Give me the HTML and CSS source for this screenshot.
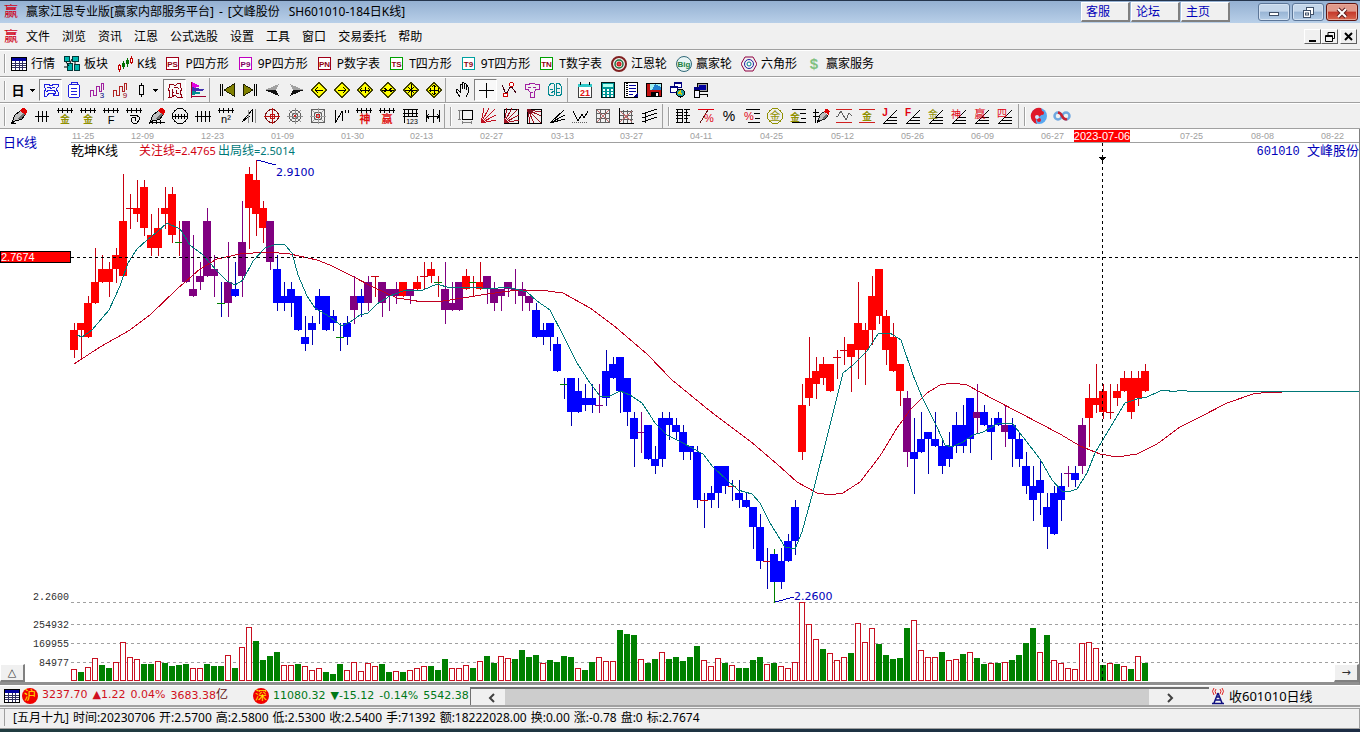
FILE: index.html
```html
<!DOCTYPE html>
<html lang="zh-CN">
<head>
<meta charset="utf-8">
<title>赢家江恩专业版</title>
<link rel="stylesheet" href="styles.css">
</head>
<body>
<div class="app">
  <header class="titlebar">
    <span class="logo">赢</span>
    <h1 class="title"><span>赢家江恩专业版[赢家内部服务平台]</span><span>-</span><span>[文峰股份</span><span class="symbol">SH601010-184日K线]</span></h1>
    <div class="links">
      <button>客服</button><button>论坛</button><button>主页</button>
    </div>
    <div class="wincontrols">
      <button aria-label="最小化" data-icon="wmin"></button>
      <button aria-label="还原" data-icon="wrestore"></button>
      <button aria-label="关闭" class="close" data-icon="wclose"></button>
    </div>
  </header>

  <nav class="menubar">
    <span class="logo">赢</span>
    <button>文件</button><button>浏览</button><button>资讯</button><button>江恩</button><button>公式选股</button><button>设置</button><button>工具</button><button>窗口</button><button>交易委托</button><button>帮助</button>
    <div class="mdi">
      <button aria-label="最小化窗口" data-icon="mmin"></button>
      <button aria-label="还原窗口" data-icon="mrestore"></button>
      <button aria-label="关闭窗口" class="mdi-close" data-icon="mclose"></button>
    </div>
  </nav>

  <div class="toolbar named">
    <button data-icon="quote">行情</button>
    <button data-icon="sector">板块</button>
    <button data-icon="kline">K线</button>
    <button data-icon="ps">P四方形</button>
    <button data-icon="p9">9P四方形</button>
    <button data-icon="pn">P数字表</button>
    <button data-icon="ts">T四方形</button>
    <button data-icon="t9">9T四方形</button>
    <button data-icon="tn">T数字表</button>
    <button data-icon="wheel">江恩轮</button>
    <button data-icon="big">赢家轮</button>
    <button data-icon="hex">六角形</button>
    <button data-icon="dollar">赢家服务</button>
  </div>

  <div class="toolbar tools">
    <div class="group">
      <button class="drop" aria-label="周期" data-icon="day"></button>
      <button class="on" aria-label="叠加" data-icon="cloud"></button>
      <button aria-label="资料" data-icon="clip"></button>
      <button aria-label="三段" data-icon="wave3"></button>
      <button aria-label="九段" data-icon="wave9"></button>
      <button class="drop" aria-label="K线样式" data-icon="candle"></button>
      <button class="on" aria-label="形态" data-icon="shape"></button>
      <button aria-label="筹码" data-icon="flag"></button>
    </div>
    <div class="group">
      <button aria-label="最前" data-icon="first"></button>
      <button aria-label="最后" data-icon="last"></button>
      <button aria-label="向前" data-icon="prev"></button>
      <button aria-label="向后" data-icon="next"></button>
      <button aria-label="左移" data-icon="dleft"></button>
      <button aria-label="右移" data-icon="dright"></button>
      <button aria-label="横向放大" data-icon="dwide"></button>
      <button aria-label="横向缩小" data-icon="dnarrow"></button>
      <button aria-label="整体缩小" data-icon="dshrink"></button>
      <button aria-label="整体放大" data-icon="dgrow"></button>
    </div>
    <div class="group">
      <button aria-label="拖动" data-icon="hand"></button>
      <button class="on" aria-label="十字光标" data-icon="cross"></button>
      <button aria-label="连线" data-icon="link"></button>
      <button aria-label="拼图" data-icon="puzzle"></button>
      <button aria-label="智能" data-icon="brain"></button>
    </div>
    <div class="group spaced">
      <button aria-label="日历" data-icon="cal"></button>
      <button aria-label="计算器" data-icon="calc"></button>
      <button aria-label="记事本" data-icon="note"></button>
      <button aria-label="保存" data-icon="save"></button>
      <button aria-label="网络" data-icon="net"></button>
      <button aria-label="数据" data-icon="pc"></button>
    </div>
  </div>

  <div class="toolbar tools">
    <div class="group">
      <button aria-label="画笔" data-icon="pen"></button>
      <button aria-label="等分尺" data-icon="ruler3"></button>
      <button aria-label="黄金尺" data-icon="gold1"></button>
      <button aria-label="黄金时间尺" data-icon="gold1"></button>
      <button aria-label="斐波那契尺" data-icon="fib"></button>
      <button aria-label="螺旋" data-icon="spiral"></button>
      <button aria-label="标尺笔" data-icon="penruler"></button>
      <button aria-label="圆尺" data-icon="circruler"></button>
      <button aria-label="密尺" data-icon="ruler4"></button>
      <button aria-label="平方尺" data-icon="nsq"></button>
      <button aria-label="镜像" data-icon="mirror"></button>
      <button aria-label="圆心" data-icon="target"></button>
      <button aria-label="圆网" data-icon="web"></button>
      <button aria-label="方网" data-icon="webbox"></button>
      <button aria-label="波幅" data-icon="zig"></button>
      <button aria-label="神尺" data-icon="shen"></button>
      <button aria-label="赢尺" data-icon="ying"></button>
      <button aria-label="数字尺" data-icon="r123"></button>
      <button aria-label="跨度" data-icon="span"></button>
    </div>
    <div class="group grip">
      <button aria-label="矩形" data-icon="rect"></button>
      <button aria-label="角度线" data-icon="fan"></button>
      <button aria-label="方框角度线" data-icon="fanbox"></button>
      <button aria-label="反向角度线" data-icon="fanbox2"></button>
      <button aria-label="射线" data-icon="rays"></button>
      <button aria-label="折线" data-icon="vee"></button>
      <button aria-label="网格" data-icon="grid"></button>
      <button aria-label="箭头网格" data-icon="gridarrow"></button>
      <button aria-label="平行线" data-icon="parallel"></button>
    </div>
    <div class="group grip">
      <button aria-label="价格尺" data-icon="ladder"></button>
      <button aria-label="斜百分比" data-icon="pctline"></button>
      <button aria-label="百分比" data-icon="pct"></button>
      <button aria-label="百分比线" data-icon="pctrule"></button>
      <button aria-label="黄金圆" data-icon="goldcirc"></button>
      <button aria-label="黄金线" data-icon="goldrule"></button>
      <button aria-label="价格笔" data-icon="pen2"></button>
      <button aria-label="波动带" data-icon="waveband"></button>
      <button aria-label="黄金带" data-icon="goldband"></button>
      <button aria-label="江恩角" data-icon="aj"></button>
      <button aria-label="斐波角" data-icon="af"></button>
      <button aria-label="黄金角" data-icon="ag"></button>
      <button aria-label="神角" data-icon="as"></button>
      <button aria-label="赢角" data-icon="ay"></button>
      <button aria-label="四角" data-icon="a4"></button>
    </div>
    <div class="group grip">
      <button aria-label="太极" data-icon="taiji"></button>
      <button aria-label="无穷" data-icon="inf"></button>
    </div>
  </div>

  <main class="chart">
    <svg class="plot" id="plot" role="img" aria-label="文峰股份日K线图"></svg>
    <button class="corner left" aria-label="展开">△</button>
    <button class="corner right" aria-label="右移">→</button>
  </main>

  <section class="indices">
    <div class="ticker">
      <span data-icon="quote" class="tick-icon"></span>
      <span class="badge">沪</span>
      <span class="values up"><span>3237.70</span><span>▲1.22</span><span>0.04%</span><span>3683.38<span class="unit">亿</span></span></span>
      <span class="badge second">深</span>
      <span class="values down"><span>11080.32</span><span>▼-15.12</span><span>-0.14%</span><span>5542.38</span></span>
    </div>
    <div class="scroll">
      <button aria-label="向左滚动" data-icon="chevl"></button>
      <div class="thumb"></div>
      <button aria-label="向右滚动" data-icon="chevr"></button>
    </div>
    <div class="receive"><span data-icon="tower" class="tick-icon"></span>收601010日线</div>
  </section>

  <footer class="status">
    <p><span>[五月十九]</span><span>时间:20230706</span><span>开:2.5700</span><span>高:2.5800</span><span>低:2.5300</span><span>收:2.5400</span><span>手:71392</span><span>额:18222028.00</span><span>换:0.00</span><span>涨:-0.78</span><span>盘:0</span><span>标:2.7674</span></p>
  </footer>
  <div class="desktop"></div>
</div>
<script src="app.js"></script>
</body>
</html>
```
FILE: styles.css
```css
* { box-sizing: border-box; }
body {
  margin: 0;
  background: #f0f0f0;
  color: #000;
  font: 12px/16px "Noto Sans", "Noto Sans CJK SC", sans-serif;
}
button {
  margin: 0;
  padding: 0;
  border: 0;
  background: none;
  color: inherit;
  font: inherit;
  white-space: nowrap;
}
svg { display: block; }
h1, p { margin: 0; font: inherit; white-space: nowrap; }
.app { display: flex; flex-direction: column; min-height: 100vh; }
.logo {
  width: 22px;
  color: #d00018;
  font: 14px/16px "Liberation Serif", "Noto Sans CJK SC", serif;
}

.titlebar {
  display: flex;
  align-items: center;
  height: 23px;
  padding: 0 2px 0 4px;
  border-top: 1px solid #24344c;
  background: linear-gradient(#94b0d2, #b8cfe8);
}
.title { display: flex; flex: 1; gap: 5px; }
.symbol { margin-left: 4px; }
.links { display: flex; gap: 1px; margin-right: 28px; }
.links button {
  width: 49px;
  height: 20px;
  padding-left: 4px;
  border: 1px solid;
  border-color: #fff #808080 #808080 #fff;
  border-right-width: 2px;
  border-bottom-width: 2px;
  background: #f0f0f0;
  color: #0000b8;
  line-height: 16px;
  text-align: left;
}
.wincontrols { display: flex; gap: 2px; }
.wincontrols button {
  display: grid;
  place-items: center;
  width: 32px;
  height: 18px;
  border: 1px solid #5c7698;
  border-radius: 3px;
  background: linear-gradient(#c4d6ea 45%, #98b4d4 50%, #b4cce6);
  box-shadow: inset 0 0 0 1px #d4e2f2;
}
.wincontrols .close {
  border-color: #601410;
  background: linear-gradient(#e09a8c 45%, #c4382a 50%, #d86850);
  box-shadow: inset 0 0 0 1px #e8a898;
}

.menubar {
  display: flex;
  align-items: center;
  height: 27px;
  padding: 1px 3px 0 4px;
  border-bottom: 1px solid #a0a0a0;
}
.menubar > button { margin-right: 12px; }
.mdi { display: flex; margin-left: auto; }
.mdi button {
  width: 17px;
  height: 15px;
  border: 1px solid;
  border-color: #fff #606060 #606060 #fff;
  background: #f0f0f0;
}
.mdi .mdi-close { margin-left: 2px; }

.toolbar {
  display: flex;
  align-items: center;
  border-top: 1px solid #fff;
  border-bottom: 1px solid #a0a0a0;
  height: 26px;
}
.toolbar::before, .grip::before {
  content: "";
  width: 1px;
  height: 19px;
  background: #a0a0a0;
  box-shadow: 1px 0 #fff;
}
.toolbar::before { margin: 0 2px 0 4px; }
.named { height: 27px; gap: 9px; }
.named::before { margin-right: -3px; }
.named button { display: flex; align-items: center; gap: 4px; }
.group { display: flex; align-items: center; }
.group + .group { padding-left: 5px; border-left: 1px solid #a0a0a0; height: 24px; }
.group.spaced { margin-left: 1px; }
.group.grip { padding-right: 2px; }
.group.grip::before { margin-right: 2px; }
.tools svg { shape-rendering: crispEdges; }
.tools .group button {
  display: grid;
  place-items: center;
  width: 23px;
  height: 22px;
}
.tools .group .drop { width: 32px; }
.tools .group .on {
  border: 1px solid;
  border-color: #808080 #fff #fff #808080;
  background: #f8f8f8;
}

.chart { position: relative; flex: 1 0 auto; background: #fff; border-right: 1px solid #808080; border-bottom: 3px solid #909090; }
.plot { width: 100%; height: 553px; shape-rendering: crispEdges; }
.plot text { white-space: pre; }
.corner {
  position: absolute;
  bottom: 0;
  width: 25px;
  height: 18px;
  border: 1px solid;
  border-color: #fff #808080 #808080 #fff;
  border-right-width: 2px;
  border-bottom-width: 2px;
  background: #f0f0f0;
  color: #303030;
  font: 11px/14px "DejaVu Sans", sans-serif;
}
.corner.left { left: 0; }
.corner.right { right: 0; }
.cjk13 { font: 13px "Noto Sans", "Noto Sans CJK SC", sans-serif; }
.cjk12 { font: 12px "Noto Sans", "Noto Sans CJK SC", sans-serif; }
.num { font-size: 11px; }
.code { font: 12px "Liberation Mono", "Noto Sans CJK SC", monospace; }
.name { font-size: 13px; }
.axis { font: 10px "Liberation Mono", monospace; fill: #303030; }
.date { font: 9px "Liberation Sans", sans-serif; fill: #a0a0a0; }
.mark { font: 11px "Liberation Sans", sans-serif; fill: #fff; }
.price { font: 11px "DejaVu Sans", sans-serif; fill: #0000b8; }

.indices {
  display: flex;
  align-items: center;
  height: 22px;
  padding: 0 0 0 4px;
  border-top: 1px solid #fff;
  border-bottom: 2px solid #a0a0a0;
}
.ticker {
  display: flex;
  align-items: center;
  width: 466px;
  overflow: hidden;
  white-space: nowrap;
  font: 11px/16px "DejaVu Sans", "Noto Sans CJK SC", sans-serif;
}
.tick-icon { flex: none; }
.values { display: flex; gap: 5px; }
.badge {
  flex: none;
  width: 16px;
  height: 16px;
  margin: 0 4px 0 2px;
  border-radius: 50%;
  background: #f00000;
  color: #ffe800;
  font-size: 12px;
  text-align: center;
}
.badge.second { margin-left: 25px; }
.up { color: #d01020; }
.unit { color: #601010; font-size: 12px; }
.down { color: #007818; }
.scroll {
  display: flex;
  align-items: stretch;
  flex: 1;
  height: 18px;
  border-top: 2px solid #707070;
  border-left: 1px solid #707070;
}
.scroll button { display: grid; place-items: center; width: 34px; padding-left: 8px; }
.scroll button:last-child { width: 60px; padding: 0 18px 0 0; }
.thumb { flex: 1; background: #cdcdcd; }
.receive {
  display: flex;
  align-items: center;
  gap: 2px;
  width: 151px;
  font-size: 13px;
  white-space: nowrap;
}

.status {
  height: 21px;
  margin-top: 1px;
  padding-left: 4px;
  border: 1px solid #a0a0a0;
  border-width: 1px 1px 1px 0;
  line-height: 17px;
}
.status p {
  display: flex;
  gap: 4px;
  margin-right: 4px;
  padding-left: 8px;
  border-left: 1px solid #a0a0a0;
}
.desktop { height: 4px; background: linear-gradient(90deg, #203c40, #1c2c44); }
```
FILE: app.js
```js
const GOLD = '#909000';

function path(d, color = '#000', extra = '') {
  return `<path d="${d}" fill="none" stroke="${color}" ${extra}/>`;
}
function fill(d, color) {
  return `<path d="${d}" fill="${color}"/>`;
}
function glyph(t, x, y, size, color, weight = 400) {
  return `<text x="${x}" y="${y}" font-size="${size}" fill="${color}" font-weight="${weight}" text-anchor="middle" font-family="'Liberation Sans','Noto Sans CJK SC',sans-serif">${t}</text>`;
}
function boxed(t, border, color = '#900010') {
  return `<rect x="2.5" y="2.5" width="12" height="12" fill="#fff" stroke="${border}" stroke-width="1"/>` + glyph(t, 8.5, 12, 8, color, 700);
}
function diamond(d) {
  return '<path d="M9 1.500L16.500 9L9 16.500L1.500 9Z" fill="#ffff00" stroke="#404000"/>' + path(d, '#000');
}
function comb(n) {
  let d = 'M1 3.500H17';
  for (let i = 0; i < n; i++) {
    const x = Math.round(2 + i * 13 / (n - 1)) + .5;
    d += `M${x} 1V6`;
  }
  return path(d);
}
const angle = path('M3 16L16 3M6 13.500H16M9 10.500H16M2 16.500H16');
const nib = fill('M2 15L5 8L10 4L15 8L12 12Z', '#c0c0c0') + fill('M8 12L13 6L15 8L12 12Z', '#707070') + path('M2 15L5 8L10 4M2 15L12 12L15 8') + fill('M10 4L12 1H15L17 4L16 8Z', '#e00000') + fill('M1 17L2 13L5 15Z', '#000');
const nibBase = path('M1 16.500H6');
const fan = 'M2 16L5 1M2 16L10 1M2 16L16 2M2 16L17 8M2 16L17 13';

const ICONS = {
  quote: '<rect x="1.500" y="2.500" width="15" height="13" fill="#fff" stroke="#000"/>' + fill('M2 3H16V6H2Z', '#0000a0') + path('M2 8.500H16M2 10.500H16M2 12.500H16M5.500 6V15M9.500 6V15M12.500 6V15', '#303060'),
  sector: '<g fill="#00b8b0" stroke="#003838"><rect x="1.500" y="1.500" width="5" height="5"/><rect x="9.500" y="1.500" width="6" height="5"/><rect x="4.500" y="8.500" width="5" height="7"/><rect x="11.500" y="9.500" width="5" height="6"/></g>' + path('M3 7L6 11M9 4L7 8M12 7V9M1 12H4'),
  kline: path('M3.500 9V17M15.500 1V9', '#c00000') + '<rect x="2.500" y="10.500" width="2" height="4" fill="#fff" stroke="#c00000"/><rect x="14.500" y="3.500" width="2" height="4" fill="#fff" stroke="#c00000"/>' + path('M7.500 6V14M11.500 3V12', '#007000') + fill('M6 8H9V12H6ZM10 5H13V9H10Z', '#007000'),
  ps: boxed('PS', '#a00018'), p9: boxed('P9', '#c000c0', '#800060'), pn: boxed('PN', '#a00018'),
  ts: boxed('TS', '#00a000'), t9: boxed('T9', '#00a0a0'), tn: boxed('TN', '#00a000'),
  wheel: '<g fill="none" stroke-width="2"><circle cx="9" cy="9" r="7" stroke="#802020"/><circle cx="9" cy="9" r="4" stroke="#207040" stroke-width="1.500"/><circle cx="9" cy="9" r="1.500" stroke="#d02020"/></g>',
  big: '<circle cx="9" cy="9" r="7.500" fill="#e8f4f4" stroke="#306878"/>' + glyph('Big', 9, 12, 8, '#208040', 700),
  hex: path('M5 2H13L17 9L13 16H5L1 9Z', '#900040') + '<circle cx="9" cy="9" r="4.500" fill="none" stroke="#2020a0"/><circle cx="9" cy="9" r="2" fill="#fff" stroke="#008090"/>',
  dollar: glyph('$', 9, 14, 15, '#80c080', 700),
  day: glyph('日', 10, 14, 13, '#000', 700) + fill('M22 8H27L24.500 11Z', '#000'),
  candle: path('M9.500 2V16') + '<rect x="7.500" y="4.500" width="4" height="9" fill="#f0f0f0" stroke="#000"/>' + fill('M21 8H26L23.500 11Z', '#000'),
  cloud: path('M2 6V3H6L9 5L12 3H16V6L14 8L16 11V14H12L14 11M2 6L4 8L2 11V15H5L7 12H11L13 15M5 6H8L9 8L11 6H13M4 11L7 9H11L14 11', '#2020e0'),
  clip: '<rect x="3.500" y="3.500" width="11" height="13" rx="2" fill="#fff" stroke="#2020e0"/>' + path('M6 3.500V1.500H12V3.500M6 7.500H12M6 10.500H12M6 13.500H12', '#2020e0'),
  wave3: path('M2.500 16V9.500H5.500V14.500H8.500V5.500H11.500V10.500H13.500V2.500H15.500V9', '#a020a0') + glyph('3', 14, 17, 8, '#000080'),
  wave9: path('M2.500 16V9.500H5.500V14.500H8.500V5.500H11.500V10.500H13.500V2.500H15.500V9', '#b02020') + glyph('9', 14, 17, 8, '#900010'),
  shape: path('M3 3H7L9 5L12 2H15L14 6L16 8L14 11L16 16H11L9 14L6 16H3L4 11L2 8L4 6ZM8 6H11L13 8M6 8V11L8 12M10 9V12H13M7 15L6 12', '#900010'),
  flag: fill('M3 1L11 5L3 8Z', '#e000e0') + fill('M3 6L17 9L3 11Z', '#4030b0') + fill('M3 10L13 12L3 14Z', '#009090') + path('M2.500 1V17M2 15.500H17', '#a00030'),
  first: path('M2.500 3V15M4.500 3V15') + '<path d="M16 3L6 9L16 15Z" fill="#808000" stroke="#202000"/>',
  last: path('M15.500 3V15M13.500 3V15') + '<path d="M2 3L12 9L2 15Z" fill="#808000" stroke="#202000"/>',
  prev: fill('M15 3L1 9H12Z', '#a0a0a0') + fill('M1 9H12L15 15Z', '#101010'),
  next: fill('M3 3L17 9H6Z', '#a0a0a0') + fill('M3 15L17 9H6Z', '#101010'),
  dleft: diamond('M5 9.500H13M8 6L5 9L8 12'), dright: diamond('M5 9.500H13M10 6L13 9L10 12'),
  dwide: diamond('M4 9.500H14M6 7L4 9L6 11M12 7L14 9L12 11M9.500 6V12'),
  dnarrow: diamond('M3 9.500H15M5 7L8 9L5 11M13 7L10 9L13 11'),
  dshrink: diamond('M3 9.500H15M9.500 3V15M6 6L12 12M12 6L6 12'),
  dgrow: diamond('M4 9.500H14M9.500 4V14M7 6L9 4L11 6M7 12L9 14L11 12M5.500 7V11M13.500 7V11'),
  hand: path('M6 16L2 10Q2 8 4 9L6 11V4Q7 2 8 4V8V2Q9 1 10 2V8V3Q11 2 12 3V9V5Q14 4 14 6V12L12 16'),
  cross: path('M9.500 2V17M2 9.500H17'),
  link: path('M2 4L6 13L11 5L16 12', '#400010') + '<g fill="#fff" stroke="#d00000"><circle cx="5.500" cy="14" r="2"/><circle cx="11.500" cy="3.500" r="2"/></g>',
  puzzle: path('M2 3.500H6L8 2H11L13 3.500H16V8.500H13L11 11V16.500H7V11L5 8.500H2ZM5 6.500H8M10 6.500H13M7.500 11H10', '#a020a0'),
  brain: path('M8 3L5 2L3 5L2 8L3 10L2 13L5 15L8 14V3M10 3L13 2L15 5L16 8L15 10L16 13L13 15L10 14V3M4 8H7M5 12L8 10M11 7L14 8M10 11H14', '#008890'),
  cal: '<rect x="2.500" y="3.500" width="13" height="13" fill="#fff" stroke="#404040"/>' + fill('M2 3H16V6H2Z', '#30c8c8') + path('M4.500 1V4M13.500 1V4') + glyph('21', 9, 15, 9, '#e01010', 700),
  calc: '<rect x="2.500" y="1.500" width="13" height="15" fill="#009898" stroke="#001818"/>' + fill('M4 3H14V6H4Z', '#b0fff0') + path('M4 8.500H14M4 11.500H14M4 14.500H14', '#fff', 'stroke-width="2" stroke-dasharray="2 2"'),
  note: '<rect x="2.500" y="1.500" width="13" height="15" fill="#fff" stroke="#000"/>' + path('M4.500 2V16', '#000', 'stroke-dasharray="1 1" stroke-width="2"') + path('M7 4.500H14M7 7.500H14M7 10.500H14M7 13.500H11', '#0000a0') + fill('M11 16L16 11V16Z', '#000080'),
  save: '<rect x="1.500" y="2.500" width="15" height="13" fill="#c01010" stroke="#000"/>' + fill('M5 3H16V9H5Z', '#a0f0f0') + fill('M6 11H14V15H6Z', '#000') + fill('M10 3L16 6V9H7Z', '#2080d0') + fill('M11 12H13V15H11Z', '#fff'),
  net: '<g fill="#fff" stroke="#000080"><rect x="6.500" y="1.500" width="7" height="5"/><rect x="2.500" y="5.500" width="7" height="6"/></g>' + fill('M6 1H14V3H6ZM2 5H10V7H2Z', '#000080') + '<circle cx="12.500" cy="12" r="4" fill="#20a0a0" stroke="#000"/>' + fill('M9 12L13 9L14 14Z', '#e0d000'),
  pc: '<rect x="6.500" y="2.500" width="10" height="8" fill="#a0a0a0" stroke="#000"/>' + fill('M8 4H15V9H8Z', '#0000a0') + fill('M3 9H8V16H3Z', '#f4f4ff') + path('M3 9H8V16H3ZM9 13.500H16V16') + fill('M3 6H8V9H3Z', '#000080'),
  pen: nib + nibBase,
  ruler3: path('M2 9.500H16M5.500 4V15M9.500 4V15M13.500 4V15'),
  ruler4: path('M1 9.500H17M3.500 4V15M7.500 4V15M11.500 4V15M15.500 4V15'),
  gold1: comb(4) + glyph('金', 9, 16, 10, GOLD, 700),
  fib: comb(4) + glyph('F', 9, 17, 11, '#000'),
  spiral: comb(4) + path('M5 8.500H12L14 10V13L12 16H8L6 14V12L8 10.500H10L11 12L10 13.500'),
  penruler: nib + path('M1 15.500H17M4.500 13V17M8.500 13V17M12.500 13V17'),
  circruler: '<circle cx="9" cy="9" r="7.500" fill="none" stroke="#000"/>' + path('M1 9.500H17M4.500 7V12M7.500 7V12M10.500 7V12M13.500 7V12'),
  nsq: comb(4) + glyph('n²', 9, 16, 11, '#000'),
  mirror: path('M2 15L12 3V15M2 15L10 9') + path('M8.500 3V16M15.500 2V16', '#909090'),
  target: '<circle cx="9" cy="9" r="6.500" fill="none" stroke="#801010"/>' + path('M9.500 1V17M1 9.500H17', '#c01010') + '<circle cx="9.500" cy="9.500" r="2.500" fill="none" stroke="#c01010"/>',
  web: '<g fill="none" stroke="#606060"><circle cx="9" cy="9" r="6"/><circle cx="9" cy="9" r="3"/></g>' + path('M9.500 1V17M1 9.500H17M3 3L15 15M15 3L3 15', '#909090') + '<circle cx="9" cy="9" r="1.500" fill="#d02020"/>',
  webbox: '<g fill="none" stroke="#606060"><rect x="2.500" y="2.500" width="13" height="13"/><rect x="5.500" y="5.500" width="7" height="7"/></g>' + path('M9.500 1V17M1 9.500H17M3 3L15 15M15 3L3 15', '#a0a0a0') + '<circle cx="9" cy="9" r="2" fill="none" stroke="#d02020"/>',
  zig: path('M3.500 3V16L10 4V14M13.500 3V6M16.500 3V6'),
  shen: comb(4) + glyph('神', 10, 16, 11, '#e01010', 700),
  ying: comb(4) + glyph('赢', 9, 16, 11, '#e01010', 700),
  r123: path('M2 2.500H17M2 6.500H17M2 9.500H17M3.500 2V16M7.500 2V10M11.500 2V10M15.500 2V10') + glyph('123', 11, 17, 7, '#000'),
  span: path('M2.500 3V15M9.500 2V16M15.500 3V15M3 9.500H15M5 7L3 9L5 12M13 7L15 9L13 12'),
  rect: path('M6.500 3.500H16.500V12.500H6.500Z') + path('M2 3.500H6M3.500 3V13M2 12.500H5M6 15.500H16M6.500 14V17M15.500 14V17', '#808080'),
  fan: path(fan, '#c01020'),
  fanbox: '<rect x="2.500" y="2.500" width="14" height="14" fill="none" stroke="#000"/>' + path(fan, '#a01020'),
  fanbox2: '<rect x="2.500" y="2.500" width="14" height="14" fill="none" stroke="#000"/>' + path('M3 3L16 5M3 3L16 9M3 3L16 16M3 3L9 16M3 3L5 16', '#a01020') + fill('M2 2L9 3L7 6L3 8Z', '#801020'),
  rays: path('M2 16L16 3M2 16L17 8M2 16L17 12'),
  vee: path('M2 4L7 14L11 7L13 11L17 4') + path('M1 15.500H17', '#606060', 'stroke-dasharray="1 1"'),
  grid: path('M2.500 2V16M6.500 2V16M11.500 2V16M15.500 2V16M2 2.500H16M2 6.500H16M2 11.500H16M2 15.500H16', '#606060') + path('M3 3L15 15M15 3L3 15', '#c07070'),
  gridarrow: path('M2.500 1V16H17') + path('M6.500 3V16M10.500 3V16M14.500 3V16M3 4.500H16M3 8.500H16M3 12.500H16', '#606060') + path('M3 4L15 15M15 4L3 15', '#c07070'),
  parallel: path('M2 7L17 2M2 11L17 6M2 15L17 10M5.500 5V16'),
  ladder: path('M3.500 2V16M8.500 2V16M2 2.500H8M2 5.500H8M2 8.500H8M2 11.500H8M2 15.500H8M10 2.500H16M10 5.500H14M10 8.500H16M10 11.500H14M10 15.500H16M12.500 2V16'),
  pctline: path('M1 2.500H17', '#e00010') + path('M11 3L3 16', '#601010') + glyph('%', 12, 15, 11, '#e00010'),
  pct: glyph('%', 9, 14, 14, '#000'),
  pctrule: path('M3 2.500H17M11 6.500H17M12 11.500H17M5 15.500H17') + glyph('%', 6, 13, 11, '#e00010'),
  goldcirc: '<circle cx="9" cy="9" r="7.500" fill="none" stroke="#909000"/>' + glyph('金', 9, 13, 11, GOLD),
  goldrule: path('M3 2.500H17M11 6.500H17M12 11.500H17M3 15.500H17') + glyph('金', 6, 14, 10, GOLD, 700),
  pen2: path('M3.500 2V16M1 5.500H7M1 9.500H7') + '<g transform="translate(4 1) scale(.8 .9)">' + nib + '</g>',
  waveband: path('M1 2.500H17M1 15.500H17', '#d02020') + path('M1 9H3L6 4L11 13L14 6L17 9', '#606060'),
  goldband: path('M1 2.500H17M1 15.500H17', '#d02020') + glyph('金', 9, 13, 10, GOLD, 700),
  aj: angle + glyph('J', 4, 9, 10, '#e00010', 700),
  af: angle + glyph('F', 4, 9, 10, '#e00010', 700),
  ag: angle + glyph('金', 6, 11, 10, GOLD),
  as: angle + glyph('神', 6, 11, 10, '#e00010'),
  ay: angle + glyph('赢', 7, 11, 11, '#e00010'),
  a4: angle + glyph('四', 6, 10, 10, '#e00010'),
  taiji: '<g shape-rendering="auto"><circle cx="9" cy="9" r="8" fill="#58a8f0"/><path d="M11 1A8 8 0 1 0 7 17Q4 12 9 10Q14 7 11 1Z" fill="#e01828"/><circle cx="12" cy="6" r="2" fill="#e01828"/><circle cx="9" cy="13" r="2" fill="#e01828"/><circle cx="7" cy="10" r="2" fill="#d0e8ff"/></g>',
  inf: '<g fill="none" stroke-width="2.500" shape-rendering="auto"><circle cx="5" cy="9" r="3.500" stroke="#70a8e0"/><circle cx="13" cy="9" r="3.500" stroke="#70a8e0"/><path d="M5 5.500Q8 6 9 9Q11 13 14 12" stroke="#c82030"/></g>',
  wmin: '<rect x="4.500" y="8.500" width="9" height="3" fill="#fff" stroke="#405068"/>',
  wrestore: '<g fill="#fff" stroke="#405068"><rect x="7.500" y="3.500" width="7" height="7"/><rect x="4.500" y="6.500" width="7" height="7"/><rect x="6.500" y="9" width="3" height="2"/></g>',
  wclose: path('M5 5L13 13M13 5L5 13', '#602020', 'stroke-width="4"') + path('M5 5L13 13M13 5L5 13', '#fff', 'stroke-width="2"'),
  mmin: path('M4 11H11', '#000', 'stroke-width="2"'),
  mrestore: path('M6 5V2.500H12.500V8.500H10M3.500 5.500H10.500V11.500H3.500ZM3 6.500H10'),
  mclose: path('M4 3L11 10M11 3L4 10', '#000', 'stroke-width="2"'),
  chevl: path('M11 5L7 9L11 13', '#404040', 'stroke-width="2"'),
  chevr: path('M7 5L11 9L7 13', '#404040', 'stroke-width="2"'),
  tower: path('M9 6L5 16M9 6L13 16M6 13H12M7 10H11M3 16.500H15', '#101080', 'stroke-width="1.500"') + path('M5 1Q2 4 5 8M13 1Q16 4 13 8M7 2Q5 4 7 7M11 2Q13 4 11 7', '#e02020')
};

document.querySelectorAll('[data-icon]').forEach(el => {
  let size = 'width="18" height="18" viewBox="0 0 18 18"';
  if (el.classList.contains('drop')) size = 'width="30" height="18" viewBox="0 0 30 18"';
  if (el.closest('.named') || el.matches('.ticker .tick-icon')) size = 'width="16" height="16" viewBox="1 1 16 16"';
  if (el.closest('.mdi')) size = 'width="15" height="13" viewBox="0 0 15 13"';
  el.insertAdjacentHTML('afterbegin', `<svg ${size} aria-hidden="true">${ICONS[el.dataset.icon]}</svg>`);
});

/* Candles: colour, high, body top, body bottom, low. Equal body values are a flat day; a sixth field is its dash colour. */
const CANDLES = `r 323 330 350 357;r 323 323 330 357;r 296 303 337 337;r 248 282 303 303;r 255 269 282 282;r 262 269 282 296;r 248 255 269 282;r 174 221 276 276;r 194 208 208 228;r 180 208 214 221;r 180 187 228 235;r 214 235 248 255;r 208 228 248 255;r 187 208 214 228;r 187 194 235 242;r 221 242 242 255 g;p 221 221 282 282;p 235 289 296 296;p 262 276 282 289;p 208 221 276 276;p 255 269 276 296;b 282 303 303 316 g;p 242 282 303 316;b 262 289 296 296;p 201 242 276 296;r 167 174 208 248;r 160 180 214 235;r 201 208 228 242;p 221 221 262 269;b 255 269 303 310;b 282 296 303 310;b 282 289 303 316;b 296 296 330 330;b 316 337 344 350;b 316 323 330 344;b 289 296 310 323;b 296 296 330 330;b 310 316 323 330;b 323 337 337 350 g;b 316 323 337 344;p 276 296 310 323;b 289 296 303 316;p 276 282 303 310;r 276 276 276 296;p 282 282 303 316;p 289 289 296 310;p 282 289 296 303;r 282 282 296 296;p 289 289 296 303;r 276 282 289 289;r 262 276 276 289;r 262 269 276 282;r 276 282 282 296 g;p 262 289 310 323;p 282 303 310 310;p 282 282 310 310;r 269 276 289 289;r 276 282 282 296 g;r 262 282 289 289;p 276 276 289 303;p 282 289 303 310;p 289 289 296 310;p 282 282 289 296;p 269 289 289 303;p 282 289 296 310;p 296 296 303 310;b 303 310 337 337;b 323 330 337 344;b 323 323 337 350;b 337 344 371 371;b 378 384 384 398 g;b 378 378 412 425;b 378 391 412 412;b 384 398 405 410;b 384 398 405 412;p 384 405 405 412;b 350 371 398 405;b 357 364 378 378;b 357 357 391 412;b 378 378 412 425;b 412 418 439 466;p 412 432 432 452;b 425 425 459 459;b 446 459 466 473;b 412 418 459 466;b 412 418 425 439;b 418 425 432 439;b 425 432 452 459;b 446 446 452 459;b 446 452 500 507;b 493 500 500 527 r;b 486 493 500 507;b 466 466 493 507;b 466 466 486 493;b 480 486 486 500 r;b 480 493 500 507;b 493 500 507 507;b 507 507 527 548;b 514 527 561 568;b 548 561 561 588 r;g 549 554 582 602;b 548 561 582 588;b 534 541 561 561;b 500 507 541 554;r 384 405 452 459;r 337 378 398 405;r 357 371 384 398;r 357 364 378 384;r 364 364 391 391;r 350 357 357 378;r 337 350 350 364;r 344 344 357 391;r 282 323 350 378;r 323 330 350 384;r 276 296 330 344;r 269 269 316 323;r 310 316 350 364;r 323 337 371 371;r 364 364 391 405;p 391 398 452 466;b 418 452 459 493;b 412 439 452 452;b 432 432 439 473;b 412 439 446 446;b 439 446 466 473;b 432 446 459 466;b 412 425 446 452;b 405 425 446 452;b 398 398 439 452;p 384 412 418 432;b 405 412 425 425;b 418 425 432 459;b 412 418 425 425;p 405 425 432 446;b 418 425 439 466;b 432 439 459 466;b 452 466 486 493;b 466 486 500 520;b 460 480 493 514;b 493 507 527 548;b 486 493 534 534;b 473 486 500 520;p 466 473 473 486;b 466 473 480 486;p 418 425 466 473;r 384 398 418 446;r 364 398 405 412;r 384 391 412 418;r 384 412 412 418;r 384 391 398 405;r 371 378 391 391;r 371 378 412 418;r 371 378 398 405;r 364 371 391 391`.split(';').map(s => s.split(' '));

/* Volume bars: r is hollow, g is solid; the number is the top edge. */
const VOLUMES = 'r669 g672 r667 r658 g665 g668 r662 r642 r657 r659 g664 g664 r661 g663 g666 g665 g664 r668 r668 g664 g666 g666 r655 g668 r647 r627 g641 g660 g656 g652 r665 r665 g664 r666 r670 r668 g672 g674 g664 r670 r662 r671 r663 r666 g664 g672 r671 g672 r670 r668 r666 g666 g670 g659 r668 r668 r665 g668 r661 g656 g663 r656 r658 g659 g650 g657 g655 r663 g660 g662 g656 g657 r668 g670 g662 r657 r661 r661 g630 g634 g635 r659 g663 g659 r652 g659 g657 g661 g657 g646 r660 r666 r658 g663 r665 g668 g668 g660 g657 r664 g663 r666 r668 r662 r602 r624 r639 g649 r653 r660 r657 g653 r623 r642 r628 g644 g655 g659 g658 g628 r620 r650 r657 r657 g652 r660 r659 g654 r652 g658 g664 r663 g663 r662 g660 g655 g643 g628 r652 g635 r660 r663 r668 r669 r643 r642 r648 g665 r663 g664 r666 g669 r656 g663'.split(' ');

const SLOW = '74,364 100,347 130,330 150,315 177,289 200,269 217,259 240,254 267,252 290,254 317,260 330,265 350,275 373,287 397,298 423,302 443,301 463,298 487,294 510,291 540,290 563,293 590,308 613,325 647,354 672,380 710,411 750,441 777,464 797,482 817,493 830,495 843,493 860,482 880,456 897,428 910,410 927,393 940,385 952,383 967,385 993,399 1020,413 1060,434 1080,446 1100,454 1117,457 1137,454 1157,444 1180,427 1200,417 1227,403 1253,394 1270,392 1282,392';
const FAST = '77,335 82,337 92,330 109,310 120,286 128,263 137,249 147,240 157,232 167,223 180,229 190,245 203,255 217,271 227,281 235,285 243,280 253,261 265,248 277,244 285,245 292,253 298,275 307,296 315,308 330,317 342,326 350,322 360,315 368,313 377,304 390,296 403,291 423,290 437,284 450,288 473,287 490,289 507,287 527,292 537,301 550,310 563,335 577,363 590,383 600,396 610,396 620,391 630,395 642,403 648,412 655,423 667,435 683,443 703,454 713,467 727,480 738,490 752,494 760,503 770,523 785,547 795,549 802,532 813,492 827,437 843,373 853,365 867,351 878,334 890,333 901,340 913,375 922,397 937,427 945,445 952,447 963,442 973,435 983,432 997,424 1012,423 1023,437 1040,459 1052,480 1062,491 1068,492 1077,489 1087,473 1095,453 1125,403 1137,399 1147,397 1160,391 1166,390 1173,392 1181,390 1187,391';
const DATES = [[72, '11-25'], [131, '12-09'], [201, '12-23'], [271, '01-09'], [341, '01-30'], [410, '02-13'], [480, '02-27'], [551, '03-13'], [620, '03-27'], [690, '04-11'], [760, '04-25'], [831, '05-12'], [901, '05-26'], [971, '06-09'], [1041, '06-27'], [1180, '07-25'], [1251, '08-08'], [1321, '08-22']];
const COLORS = { r: '#ff0000', p: '#800080', b: '#0000ff', g: '#008000' };
const WICKS = { r: '#c80010', p: '#800080', b: '#0000b0', g: '#008000' };

function rect(x, y, w, h, color) {
  return `<rect x="${x}" y="${y}" width="${w}" height="${h}" fill="${color}"/>`;
}
function line(x1, y1, x2, y2, color, dash = '') {
  return `<line x1="${x1}" y1="${y1}" x2="${x2}" y2="${y2}" stroke="${color}" stroke-dasharray="${dash}"/>`;
}
function label(x, y, cls, text, attrs = '') {
  return `<text x="${x}" y="${y}" class="${cls}" ${attrs}>${text}</text>`;
}

let out = '';
for (const y of [602.5, 624.5, 643.5, 662.5]) out += line(71, y, '100%', y, '#a0a0a0', '3 3');
VOLUMES.forEach((v, i) => {
  const x = 71 + 7 * i, top = +v.slice(1);
  out += v[0] === 'g' ? rect(x, top, 6, 681 - top, '#008000')
    : `<rect x="${x + .5}" y="${top + .5}" width="5" height="${680 - top}" fill="#fff" stroke="#c81020"/>`;
});
CANDLES.forEach(([c, high, top, bottom, low, flat], i) => {
  const x = 74 + 7 * i;
  out += rect(x, high, 1, low - high + 1, WICKS[c]);
  out += top === bottom ? rect(x - 4, top, 8, 1, WICKS[flat || c]) : rect(x - 4, top, 8, bottom - top, COLORS[c === 'g' ? 'b' : c]);
});
out += `<polyline points="${SLOW}" fill="none" stroke="#c00020"/><polyline points="${FAST}" fill="none" stroke="#007878"/>`;
out += line(1187, 391.5, '100%', 391.5, '#007878');
out += line(71, 142.5, '100%', 142.5, '#a0a0a0');
DATES.forEach(([x, t]) => { out += label(x, 139, 'date', t); });
out += line(71, 257.5, '100%', 257.5, '#000', '3 3') + line(1102.5, 143, 1102.5, 681, '#000', '3 3');
out += fill('M1099 157H1106L1102.500 161Z', '#000');
out += rect(1074, 130, 56, 12, '#ff0000') + label(1102, 140, 'mark', '2023-07-06', 'text-anchor="middle"');
out += '<rect x="0.500" y="251.500" width="70" height="11" fill="#ff0000" stroke="#000"/>' + label(1, 261, 'mark', '2.7674');
out += line(257, 160, 276, 165, '#0000b8') + label(276, 176, 'price', '2.9100');
out += line(775, 602, 794, 597, '#0000b8') + label(794, 600, 'price', '2.2600');
out += label(69, 600, 'axis', '2.2600', 'text-anchor="end"') + label(69, 628, 'axis', '254932', 'text-anchor="end"') + label(69, 647, 'axis', '169955', 'text-anchor="end"') + label(69, 666, 'axis', '84977', 'text-anchor="end"');
out += label(3, 147, 'cjk13', '日K线', 'fill="#0000b8"') + label(71, 155, 'cjk13', '乾坤K线');
out += label(139, 155, 'cjk12', '关注线<tspan class="num">=2.4765</tspan>', 'fill="#d00010"') + label(218, 155, 'cjk12', '出局线<tspan class="num">=2.5014</tspan>', 'fill="#007878"');
out += label('100%', 155, 'code', '601010 <tspan class="name">文峰股份</tspan>', 'fill="#0000b8" text-anchor="end"');
document.getElementById('plot').innerHTML = `<g transform="translate(0 -129)">${out}</g>`;
```
